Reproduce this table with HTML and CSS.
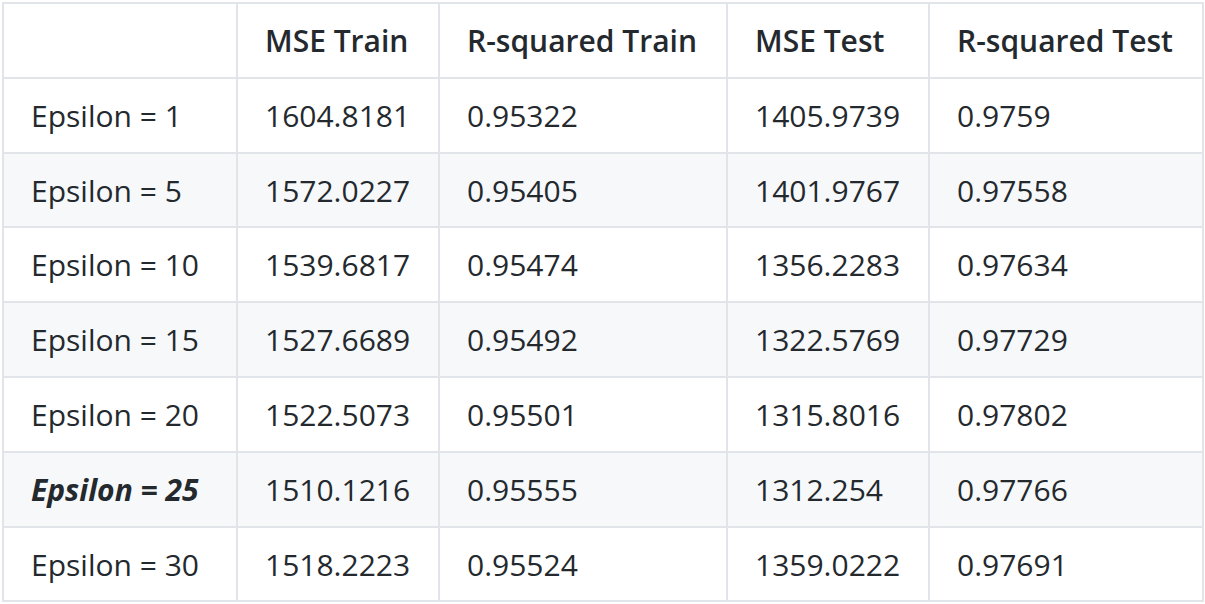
FILE: index.html
```html
<!DOCTYPE html>
<html>
<head>
<meta charset="utf-8">
<link rel="stylesheet" href="styles.css">
</head>
<body>
<table class="results">
  <colgroup>
    <col class="c1"><col class="c2"><col class="c3"><col class="c4"><col class="c5">
  </colgroup>
  <thead>
    <tr><th></th><th>MSE Train</th><th>R-squared Train</th><th>MSE Test</th><th>R-squared Test</th></tr>
  </thead>
  <tbody>
    <tr><td>Epsilon = 1</td><td>1604.8181</td><td>0.95322</td><td>1405.9739</td><td>0.9759</td></tr>
    <tr><td>Epsilon = 5</td><td>1572.0227</td><td>0.95405</td><td>1401.9767</td><td>0.97558</td></tr>
    <tr><td>Epsilon = 10</td><td>1539.6817</td><td>0.95474</td><td>1356.2283</td><td>0.97634</td></tr>
    <tr><td>Epsilon = 15</td><td>1527.6689</td><td>0.95492</td><td>1322.5769</td><td>0.97729</td></tr>
    <tr><td>Epsilon = 20</td><td>1522.5073</td><td>0.95501</td><td>1315.8016</td><td>0.97802</td></tr>
    <tr><td><strong><em>Epsilon = 25</em></strong></td><td>1510.1216</td><td>0.95555</td><td>1312.254</td><td>0.97766</td></tr>
    <tr><td>Epsilon = 30</td><td>1518.2223</td><td>0.95524</td><td>1359.0222</td><td>0.97691</td></tr>
  </tbody>
</table>
</body>
</html>
```
FILE: styles.css
```css
html, body {
  margin: 0;
  background: #ffffff;
}
body {
  padding: 2px 2px;
  font-family: "Open Sans", "Noto Sans", "Liberation Sans", sans-serif;
  color: #24292e;
}
.results {
  border-collapse: collapse;
  table-layout: fixed;
  width: 1200px;
  font-size: 30px;
}
.c1 { width: 234px; }
.c2 { width: 202px; }
.c3 { width: 288px; }
.c4 { width: 202px; }
.c5 { width: 274px; }
.results th,
.results td {
  border: 2px solid #e1e4e8;
  padding: 13px 27px 11px;
  line-height: 48.8px;
  text-align: left;
  white-space: nowrap;
}
.results th {
  font-weight: 600;
}
.results tbody tr:nth-child(even) {
  background: #f6f8fa;
}
.results strong {
  font-weight: 700;
}
```
